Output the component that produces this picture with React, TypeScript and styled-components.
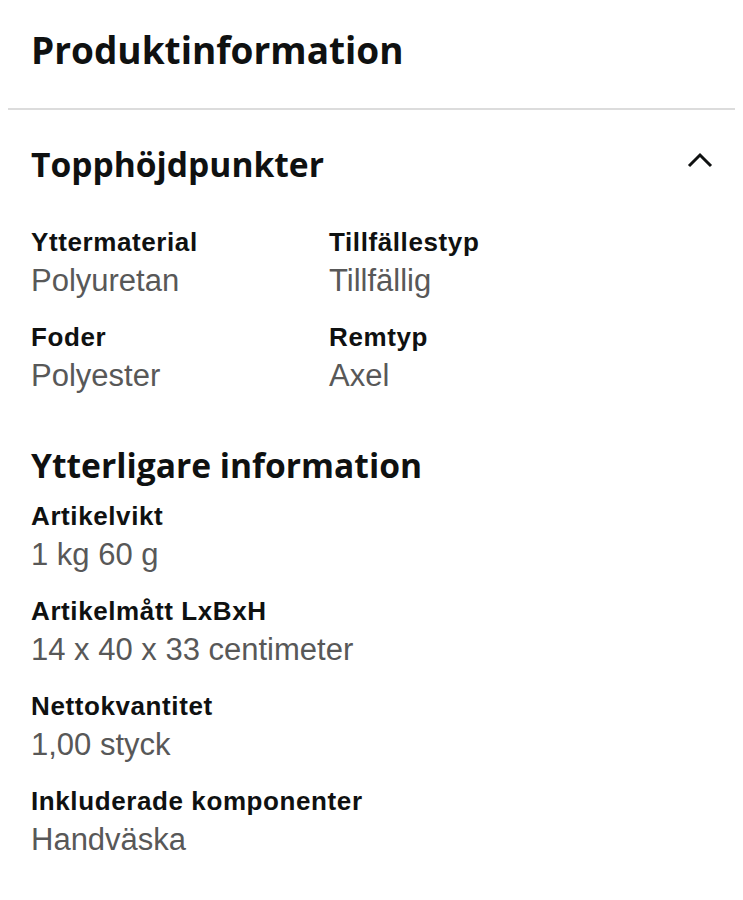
import React from 'react'
import styled, { createGlobalStyle } from 'styled-components'

const GlobalStyle = createGlobalStyle`
  body {
    margin: 0;
    background: #ffffff;
    color: #0f1111;
  }
`

const StyledPage = styled.div`
  width: 743px;
  padding-bottom: 40px;
`

const PageTitle = styled.h1`
  margin: 0;
  padding: 28px 31px 0;
  font-family: 'Open Sans', 'Noto Sans', sans-serif;
  font-weight: 700;
  font-size: 37px;
  line-height: 44px;
  color: #0f1111;
`

const Divider = styled.div`
  height: 2px;
  margin: 36px 8px 0;
  background-color: #dcdcdc;
`

const SectionRow = styled.div`
  display: flex;
  justify-content: space-between;
  align-items: flex-start;
  padding: 0 30px 0 31px;
  margin-top: 34px;
`

const SectionTitle = styled.h2<{ $top?: number }>`
  margin: ${(p) => p.$top || 0}px 0 0;
  font-family: 'Open Sans', 'Noto Sans', sans-serif;
  font-weight: 700;
  font-size: 33.6px;
  line-height: 40px;
  color: #0f1111;
`

const Chevron = styled.svg`
  width: 28px;
  height: 40px;
  display: block;
`

const SpecGrid = styled.div`
  display: grid;
  grid-template-columns: 298px 1fr;
  row-gap: 21px;
  padding: 0 31px;
  margin-top: 42px;
`

const SpecList = styled.div`
  display: flex;
  flex-direction: column;
  gap: 21px;
  padding: 0 31px;
  margin-top: 15px;
`

const ExtraTitle = styled(SectionTitle)`
  padding: 0 31px;
`

const SpecItem = styled.div`
  display: flex;
  flex-direction: column;
`

const SpecLabel = styled.div`
  font-family: 'Liberation Sans', Arial, sans-serif;
  font-weight: 700;
  font-size: 26px;
  line-height: 32px;
  letter-spacing: 0.6px;
  color: #0f1111;
`

const SpecValue = styled.div`
  margin-top: 4px;
  font-family: 'Liberation Sans', Arial, sans-serif;
  font-weight: 400;
  font-size: 31px;
  line-height: 38px;
  color: #585858;
`

const highlights = [
  { label: 'Yttermaterial', value: 'Polyuretan' },
  { label: 'Tillfällestyp', value: 'Tillfällig' },
  { label: 'Foder', value: 'Polyester' },
  { label: 'Remtyp', value: 'Axel' },
]

const extra = [
  { label: 'Artikelvikt', value: '1 kg 60 g' },
  { label: 'Artikelmått LxBxH', value: '14 x 40 x 33 centimeter' },
  { label: 'Nettokvantitet', value: '1,00 styck' },
  { label: 'Inkluderade komponenter', value: 'Handväska' },
]

const App: React.FC = () => {
  return (
    <>
      <GlobalStyle />
      <StyledPage>
        <PageTitle>Produktinformation</PageTitle>
        <Divider />

        <SectionRow>
          <SectionTitle>Topphöjdpunkter</SectionTitle>
          <Chevron viewBox="0 0 28 40">
            <polyline points="4,22 15,11 26,22" fill="none" stroke="#0f1111" strokeWidth="3" />
          </Chevron>
        </SectionRow>

        <SpecGrid>
          {highlights.map((h) => (
            <SpecItem key={h.label}>
              <SpecLabel>{h.label}</SpecLabel>
              <SpecValue>{h.value}</SpecValue>
            </SpecItem>
          ))}
        </SpecGrid>

        <ExtraTitle $top={50}>Ytterligare information</ExtraTitle>
        <SpecList>
          {extra.map((e) => (
            <SpecItem key={e.label}>
              <SpecLabel>{e.label}</SpecLabel>
              <SpecValue>{e.value}</SpecValue>
            </SpecItem>
          ))}
        </SpecList>
      </StyledPage>
    </>
  )
}

export default App
